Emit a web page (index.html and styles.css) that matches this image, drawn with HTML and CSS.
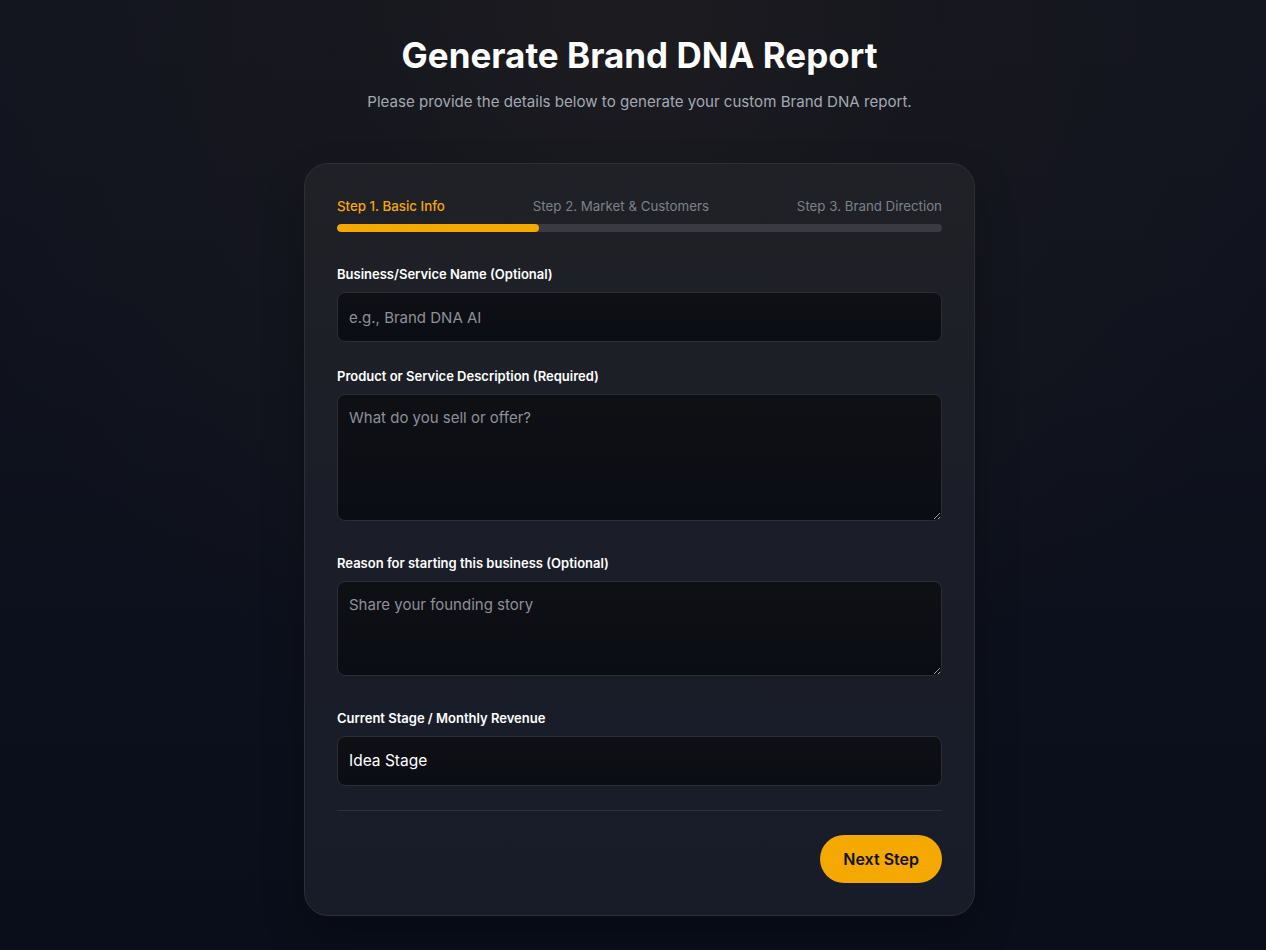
FILE: index.html
```html
<!DOCTYPE html>
<html lang="en">
<head>
<meta charset="utf-8">
<title>Generate Brand DNA Report</title>
<link rel="stylesheet" href="styles.css">
</head>
<body>
<main class="page">
  <header class="intro">
    <h1 class="title">Generate Brand DNA Report</h1>
    <p class="subtitle">Please provide the details below to generate your custom Brand DNA report.</p>
  </header>

  <form class="card">
    <div class="steps">
      <span class="step active">Step 1. Basic Info</span>
      <span class="step">Step 2. Market &amp; Customers</span>
      <span class="step">Step 3. Brand Direction</span>
    </div>
    <div class="progress"><div class="progress-fill" style="width: 33.33%"></div></div>

    <div class="field field-first">
      <label class="label" for="name">Business/Service Name (Optional)</label>
      <input class="control input" id="name" type="text" placeholder="e.g., Brand DNA AI">
    </div>

    <div class="field field-tight">
      <label class="label" for="desc">Product or Service Description (Required)</label>
      <textarea class="control area area-lg" id="desc" placeholder="What do you sell or offer?"></textarea>
    </div>

    <div class="field">
      <label class="label" for="reason">Reason for starting this business (Optional)</label>
      <textarea class="control area area-sm" id="reason" placeholder="Share your founding story"></textarea>
    </div>

    <div class="field">
      <label class="label" for="stage">Current Stage / Monthly Revenue</label>
      <select class="control input select" id="stage">
        <option>Idea Stage</option>
        <option>Pre-revenue</option>
        <option>Under $10k / month</option>
      </select>
    </div>

    <div class="actions">
      <button class="btn-next" type="button">Next Step</button>
    </div>
  </form>
</main>
</body>
</html>
```

FILE: styles.css
```css
* { box-sizing: border-box; }

html, body {
  margin: 0;
  min-height: 100%;
}

body {
  font-family: Inter, "Noto Sans", sans-serif;
  color: #ffffff;
  background-color: #0a0e1a;
  background-image:
    radial-gradient(ellipse 60% 75% at 50% 0%, rgba(28, 28, 32, 1) 0%, rgba(24, 24, 30, 0.75) 40%, rgba(10, 14, 26, 0) 100%),
    linear-gradient(180deg, #121520 0%, #0a0e1a 100%);
  min-height: 950px;
}

.page {
  display: flex;
  flex-direction: column;
  align-items: center;
  padding: 33px 0 0 13px;
}

.intro {
  text-align: center;
}

.title {
  margin: 0;
  font-size: 35px;
  line-height: 44px;
  font-weight: 700;
  letter-spacing: 0;
  color: #ffffff;
}

.subtitle {
  margin: 13px 0 0;
  font-size: 15.1px;
  line-height: 24px;
  color: #a3a8b4;
}

.card {
  margin-top: 49px;
  width: 671px;
  padding: 32px 32px 32px;
  border-radius: 24px;
  border: 1px solid #2c2f37;
  background: linear-gradient(180deg, #202126 0%, #1b1e28 45%, #181c29 100%);
  box-shadow: 0 20px 40px rgba(0, 0, 0, 0.25);
}

.steps {
  display: flex;
  justify-content: space-between;
  font-size: 13.3px;
  line-height: 20px;
  color: #7d8089;
}

.step.active {
  color: #f5a800;
  font-weight: 500;
}

.progress {
  margin-top: 8px;
  height: 8px;
  border-radius: 4px;
  background: #3a3b42;
  overflow: hidden;
}

.progress-fill {
  height: 100%;
  border-radius: 4px;
  background: #f5a800;
}

.field {
  display: flex;
  flex-direction: column;
  margin-top: 32px;
}

.field-tight {
  margin-top: 24px;
}

.label {
  font-size: 13px;
  line-height: 20px;
  font-weight: 600;
  color: #ffffff;
  margin-bottom: 8px;
}

.control {
  display: block;
  width: 100%;
  margin: 0;
  font-family: inherit;
  font-size: 15px;
  color: #ffffff;
  background: linear-gradient(180deg, #0f1014 0%, #0b0d15 100%);
  border: 1px solid #2a2d35;
  border-radius: 8px;
  outline: none;
}

.control::placeholder {
  color: #8d9099;
  opacity: 1;
}

.input {
  height: 50px;
  padding: 0 11px;
}

.select {
  appearance: none;
  -webkit-appearance: none;
  font-size: 15.5px;
  line-height: 48px;
}

.area {
  padding: 11px;
  line-height: 24px;
  resize: vertical;
}

.area-lg {
  height: 127px;
}

.area-sm {
  height: 95px;
}

.actions {
  display: flex;
  justify-content: flex-end;
  margin-top: 24px;
  padding-top: 24px;
  border-top: 1px solid #2d303a;
}

.btn-next {
  height: 48px;
  padding: 0 23px;
  border: none;
  border-radius: 999px;
  background: #f5a800;
  color: #111111;
  font-family: inherit;
  font-size: 16px;
  font-weight: 600;
  cursor: pointer;
}
```
